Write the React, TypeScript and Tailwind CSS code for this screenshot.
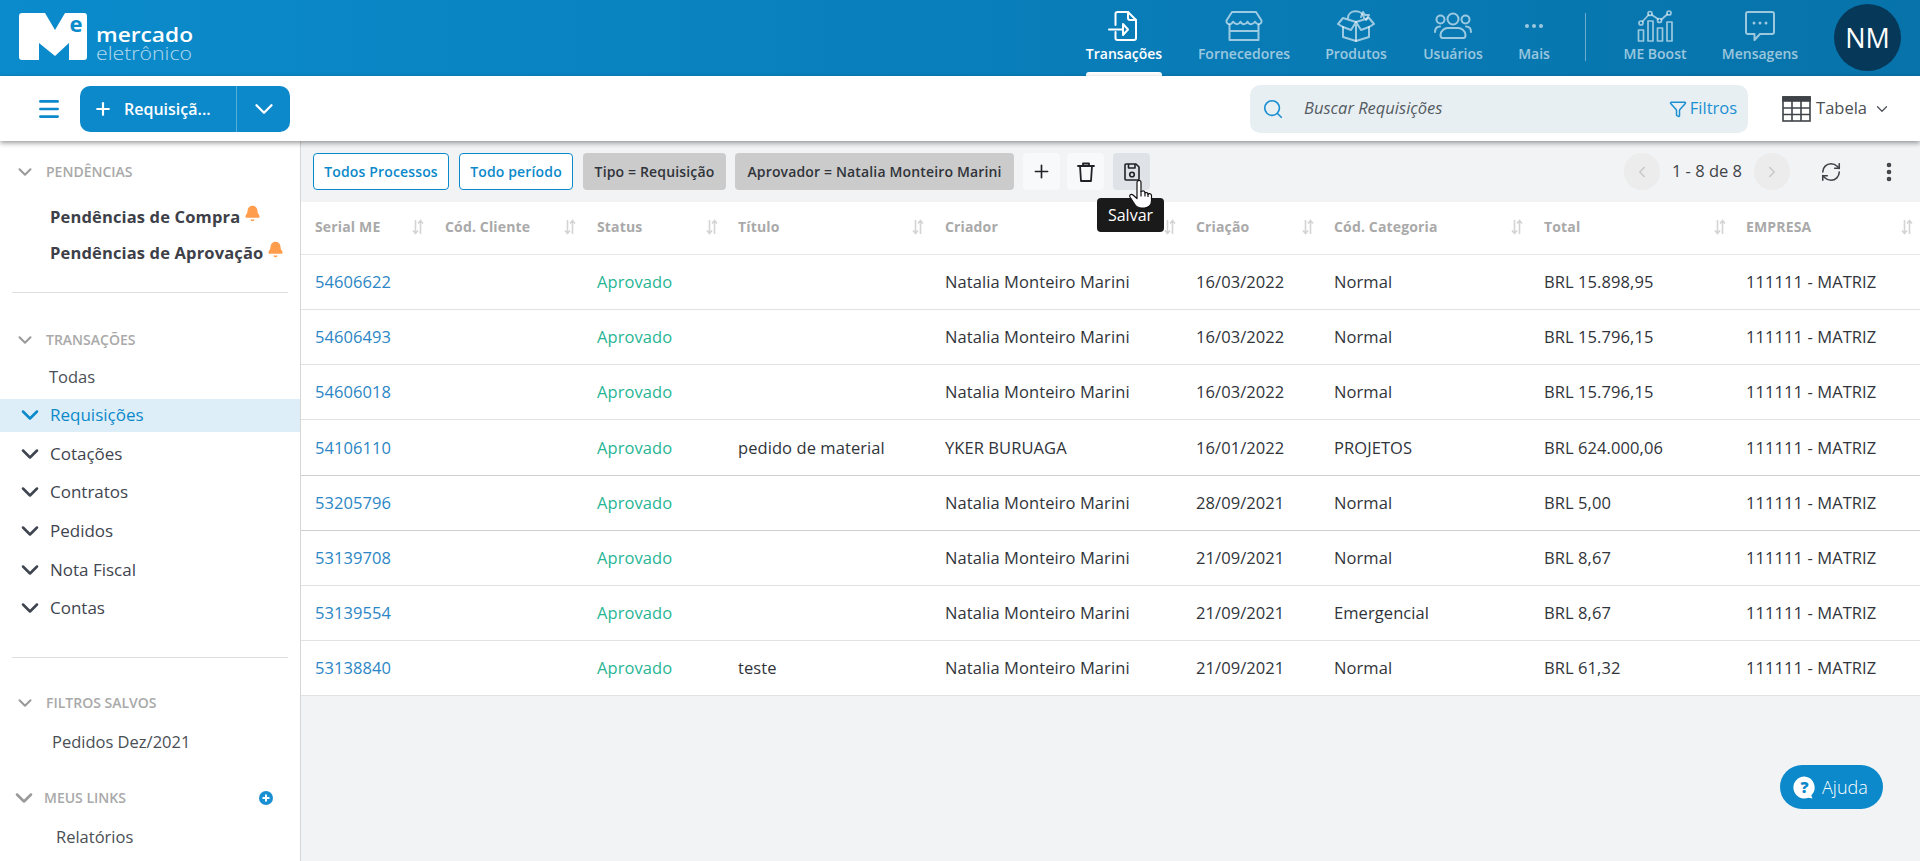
import React from "react";
import { Search, Funnel, ChevronDown, ChevronLeft, ChevronRight, RefreshCw, Plus, EllipsisVertical, Bell, Menu } from "lucide-react";

const cols = "grid grid-cols-[144px_152px_141px_207px_251px_138px_210px_202px_1fr]";

const heads: [string, number][] = [
  ["Serial ME", 27], ["Cód. Cliente", 27], ["Status", 26], ["Título", 27], ["Criador", 26], ["Criação", 26], ["Cód. Categoria", 27], ["Total", 26], ["EMPRESA", 13],
];

const rows = [
  ["54606622", "", "Natalia Monteiro Marini", "16/03/2022", "Normal", "BRL 15.898,95"],
  ["54606493", "", "Natalia Monteiro Marini", "16/03/2022", "Normal", "BRL 15.796,15"],
  ["54606018", "", "Natalia Monteiro Marini", "16/03/2022", "Normal", "BRL 15.796,15"],
  ["54106110", "pedido de material", "YKER BURUAGA", "16/01/2022", "PROJETOS", "BRL 624.000,06"],
  ["53205796", "", "Natalia Monteiro Marini", "28/09/2021", "Normal", "BRL 5,00"],
  ["53139708", "", "Natalia Monteiro Marini", "21/09/2021", "Normal", "BRL 8,67"],
  ["53139554", "", "Natalia Monteiro Marini", "21/09/2021", "Emergencial", "BRL 8,67"],
  ["53138840", "teste", "Natalia Monteiro Marini", "21/09/2021", "Normal", "BRL 61,32"],
];

function SortIcon() {
  return (
    <svg width="12" height="16" viewBox="0 0 12 16" fill="none" stroke="#d4d4d4" strokeWidth="1.6">
      <path d="M3.5 1v13M1 11.5 3.5 14.5 6 11.5" />
      <path d="M8.5 15V2M6 4.5 8.5 1.5 11 4.5" />
    </svg>
  );
}

function Logo() {
  return (
    <svg width="176" height="50" viewBox="0 0 176 50" className="shrink-0 overflow-visible" fontFamily="'Open Sans', sans-serif">
      <path
        d="M3 0H26L36 17 46 0H65a3 3 0 0 1 3 3V44a3 3 0 0 1-3 3H50V30L36 43 20 30V47H3a3 3 0 0 1-3-3V3a3 3 0 0 1 3-3Z"
        fill="#fff"
      />
      <text x="57" y="19" textAnchor="middle" fontWeight="700" fontSize="22" fill="#0b8acb">e</text>
      <text x="77" y="28.500" fontWeight="600" fontSize="19" fill="#fff" textLength="97" lengthAdjust="spacingAndGlyphs">mercado</text>
      <text x="77" y="47" fontWeight="300" fontSize="19" fill="#fff" fillOpacity="0.7" textLength="96" lengthAdjust="spacingAndGlyphs">eletrônico</text>
    </svg>
  );
}

const stroke = { fill: "none", stroke: "currentColor", strokeWidth: 2, strokeLinecap: "round", strokeLinejoin: "round" } as const;

function IconTrans() {
  return (
    <svg width="32" height="32" viewBox="0 0 32 32" {...stroke}>
      <path d="M7.500 15V4a2 2 0 0 1 2-2h10.500l8 8v18a2 2 0 0 1-2 2H9.500a2 2 0 0 1-2-2v-6" />
      <path d="M20 2v6a2 2 0 0 0 2 2h6" />
      <path d="M1 19.500h13" />
      <path d="M15 14l5 5.500-5 5.500Z" />
    </svg>
  );
}
function IconStore() {
  return (
    <svg width="38" height="30" viewBox="0 0 38 30" {...stroke}>
      <path d="M7 1h24l5.500 8.500c.5 2-1 3.700-3 3.700-2 0-3-1.700-3.500-2.500-.8 1.200-2.200 2.500-4 2.500s-3-1.300-3.500-2.500c-.7 1.200-1.700 2.500-3.500 2.500s-3-1.300-3.500-2.500c-.7 1.200-1.700 2.500-3.500 2.500S9 11.900 8 10.700C7.500 11.900 6.500 13.200 4.500 13.200c-2 0-3.500-1.700-3-3.700Z" />
      <path d="M4.500 14v15h29V14M4.500 20h29" />
    </svg>
  );
}
function IconGift() {
  return (
    <svg width="38" height="32" viewBox="0 0 38 32" {...stroke}>
      <path d="M19 12 6 8 1 14l5 3V27l13 4 13-4V17l5-3-5-6Z" />
      <path d="M19 12v19M19 12l-5 8-8-3M19 12l5 8 8-3" />
      <path d="M11 8c0-9 15-9 16 0" />
      <path d="M24 7l2-5 2 3h4l-3 5" />
    </svg>
  );
}
function IconUsers() {
  return (
    <svg width="38" height="28" viewBox="0 0 38 28" {...stroke}>
      <circle cx="19" cy="7" r="5.500" />
      <circle cx="6.500" cy="7.500" r="4" />
      <circle cx="31.500" cy="7.500" r="4" />
      <path d="M8.500 26c-2 0-2-1.500-2-3 0-4 4-7 7-7h11c3 0 7 3 7 7 0 1.500 0 3-2 3Z" />
      <path d="M1 20c0-3.500 2-5.500 5-5.500M37 20c0-3.500-2-5.500-5-5.500" />
    </svg>
  );
}
function IconChart() {
  return (
    <svg width="36" height="32" viewBox="0 0 36 32" {...stroke} strokeWidth={1.7}>
      <circle cx="4" cy="13" r="2" />
      <circle cx="13" cy="3.500" r="2" />
      <circle cx="22.500" cy="10.500" r="2" />
      <circle cx="32" cy="3" r="2" />
      <path d="M5.500 11.500 11.500 5M15 5l6 4M24.500 9.500 30 4.500" />
      <rect x="1.500" y="20" width="5" height="11" />
      <rect x="11" y="11" width="5" height="20" />
      <rect x="20.500" y="18" width="5" height="13" />
      <rect x="30" y="12" width="5" height="19" />
    </svg>
  );
}
function IconMsg() {
  return (
    <svg width="30" height="30" viewBox="0 0 30 30" fill="none" stroke="currentColor" strokeWidth="2" strokeLinejoin="round">
      <path d="M3 1h24a2 2 0 0 1 2 2v18a2 2 0 0 1-2 2H15l-5.500 6v-6H3a2 2 0 0 1-2-2V3a2 2 0 0 1 2-2Z" />
      <circle cx="9" cy="12" r="1.500" fill="currentColor" stroke="none" />
      <circle cx="15" cy="12" r="1.500" fill="currentColor" stroke="none" />
      <circle cx="21" cy="12" r="1.500" fill="currentColor" stroke="none" />
    </svg>
  );
}
function IconDots() {
  return (
    <svg width="20" height="6" viewBox="0 0 20 6" fill="currentColor">
      <circle cx="3" cy="3" r="2" />
      <circle cx="10" cy="3" r="2" />
      <circle cx="17" cy="3" r="2" />
    </svg>
  );
}
function IconTrash() {
  return (
    <svg width="20" height="22" viewBox="0 0 20 22" fill="none" stroke="#1f2328" strokeWidth="1.8" strokeLinejoin="round" strokeLinecap="round">
      <path d="M2 5h16M7 5V2.500h6V5" />
      <path d="M4 5l1 15h10l1-15" />
    </svg>
  );
}
function IconSave() {
  return (
    <svg width="16" height="18" viewBox="0 0 16 18" fill="none" stroke="#1f2328" strokeWidth="1.6" strokeLinejoin="round">
      <path d="M2 1h10l3 3v12a1 1 0 0 1-1 1H2a1 1 0 0 1-1-1V2a1 1 0 0 1 1-1Z" />
      <path d="M4.500 1v4h6.500V1" />
      <circle cx="8" cy="11.500" r="2.300" />
    </svg>
  );
}
function Hand() {
  return (
    <svg width="25" height="29" viewBox="0 0 25 29" fill="#fff" stroke="#111" strokeWidth="1.2" strokeLinejoin="round" strokeLinecap="round">
      <path d="M8 2.500a2 2 0 0 1 4 0v9l1-.3a2 2 0 0 1 3 1.300v.4a2 2 0 0 1 3 .8v.6a2 2 0 0 1 3.500 1.200V21c0 4-3 7-7 7h-3c-3 0-5-1-7-4L1 17c-1-2 1-3.500 3-2l4 3.500Z" />
      <path d="M12 11.500V16M16 12.800V16M19 14v2.500" fill="none" />
    </svg>
  );
}

function NavItem({ icon, label, w, active }: { icon: React.ReactNode; label: string; w: string; active?: boolean }) {
  return (
    <div className={`relative flex flex-col items-center h-[76px] shrink-0 ${w} ${active ? "text-white" : "text-white/60"}`}>
      <div className="h-[45px] pt-[6px] flex items-center justify-center">{icon}</div>
      <div className="text-[14px] leading-[18px] font-semibold whitespace-nowrap">{label}</div>
      {active && <div className="absolute bottom-0 left-[22px] w-[76px] h-[4px] bg-white rounded-t-[3px]" />}
    </div>
  );
}

function SectionTitle({ label, className }: { label: string; className: string }) {
  return (
    <div className={`flex items-center h-[18px] text-[#a9a9a9] ${className}`}>
      <ChevronDown size={22} strokeWidth={2.2} className="text-[#999] ml-[14px] mr-[10px] shrink-0" />
      <span className="text-[14px] leading-[18px] font-semibold">{label}</span>
    </div>
  );
}

function SideExpand({ label, active }: { label: string; active?: boolean }) {
  return (
    <div className={`flex items-center h-[33px] mb-[5.65px] ${active ? "bg-[#deeef8] text-[#0b89ca]" : "text-[#3f4550]"}`}>
      <ChevronDown size={28} strokeWidth={2.2} className="ml-[16px] mr-[6px] shrink-0" />
      <span className="text-[17px] font-medium leading-[20px]">{label}</span>
    </div>
  );
}

function PendItem({ label }: { label: string }) {
  return (
    <div className="flex items-start pl-[50px] h-[36px] text-[#3d4048]">
      <span className="text-[16.5px] leading-[22px] font-bold tracking-[0.15px] whitespace-nowrap">{label}</span>
      <Bell size={17} fill="#ff9d4d" stroke="#ff9d4d" className="ml-[4px] -mt-[1px] shrink-0" />
    </div>
  );
}

function Pill({ children, kind, className }: { children: React.ReactNode; kind: "o" | "g"; className: string }) {
  return (
    <div className={`h-[37px] flex items-center justify-center rounded-[4px] text-[14px] font-semibold tracking-[0.15px] whitespace-nowrap ${className} ${kind === "o" ? "border border-[#0b89ca] bg-white text-[#0b89ca]" : "bg-[#cbcbcb] text-[#30343a]"}`}>
      {children}
    </div>
  );
}

export default function App() {
  return (
    <div className="w-[1920px] h-[861px] overflow-hidden flex flex-col bg-[#f1f3f5] text-[#30343a] font-['Open_Sans',sans-serif] relative">
      {/* top bar */}
      <header className="h-[76px] shrink-0 flex items-start bg-gradient-to-r from-[#0b8bcc] to-[#0773aa]">
        <div className="ml-[19px] mt-[13px]">
          <Logo />
        </div>
        <nav className="ml-auto flex items-start pr-[19px]">
          <NavItem icon={<IconTrans />} label="Transações" w="w-[120px]" active />
          <NavItem icon={<IconStore />} label="Fornecedores" w="w-[120px]" />
          <NavItem icon={<IconGift />} label="Produtos" w="w-[104px]" />
          <NavItem icon={<IconUsers />} label="Usuários" w="w-[90px]" />
          <NavItem icon={<IconDots />} label="Mais" w="w-[72px]" />
          <div className="w-px h-[48px] mt-[13px] ml-[15px] mr-[2px] bg-white/40 shrink-0" />
          <NavItem icon={<IconChart />} label="ME Boost" w="w-[134px]" />
          <NavItem icon={<IconMsg />} label="Mensagens" w="w-[76px]" />
          <div className="ml-[36px] mt-[4px] w-[67px] h-[67px] rounded-full bg-[#06385a] text-white flex items-center justify-center text-[27px] leading-none">NM</div>
        </nav>
      </header>

      {/* second bar */}
      <div className="relative z-10 h-[65px] shrink-0 bg-white flex items-center shadow-[0_2px_5px_rgba(0,0,0,0.4)]">
        <Menu size={26} strokeWidth={2.4} className="ml-[36px] text-[#0b89ca] shrink-0" />
        <div className="ml-[18px] w-[210px] h-[46px] rounded-[10px] bg-[#0b89ca] text-white flex items-center">
          <Plus size={20} strokeWidth={2.6} className="ml-[13px] shrink-0" />
          <span className="ml-[11px] w-[112px] text-[16px] font-semibold whitespace-nowrap">Requisiçã...</span>
          <div className="w-px h-[46px] bg-white/30" />
          <ChevronDown size={30} strokeWidth={1.9} className="ml-[12px]" />
        </div>
        <div className="ml-auto w-[498px] h-[48px] rounded-[10px] bg-[#e8eff3] flex items-center">
          <Search size={22} strokeWidth={1.8} className="ml-[12px] text-[#1a8fd1] shrink-0" />
          <span className="ml-[20px] text-[16.5px] italic text-[#555b62]">Buscar Requisições</span>
          <Funnel size={18} strokeWidth={2} className="ml-auto text-[#1a8fd1] shrink-0" />
          <span className="ml-[3px] mr-[11px] text-[16.5px] text-[#1a8fd1]">Filtros</span>
        </div>
        <div className="ml-[34px] mr-[29px] flex items-center text-[#4a4f55]">
          <svg width="29" height="26" viewBox="0 0 29 26" fill="none" stroke="#3f4348" strokeWidth="1.6" className="shrink-0">
            <rect x="1" y="1" width="27" height="24" />
            <rect x="1" y="1" width="27" height="4" fill="#3f4348" />
            <path d="M10 5v20M19 5v20M1 12h27M1 18.500h27" />
          </svg>
          <span className="ml-[5px] text-[16.5px]">Tabela</span>
          <ChevronDown size={18} strokeWidth={1.6} className="ml-[6px]" />
        </div>
      </div>

      <div className="flex flex-1 min-h-0">
        {/* sidebar */}
        <aside className="w-[301px] shrink-0 bg-white border-r border-[#d6d6d6]">
          <SectionTitle label="PENDÊNCIAS" className="mt-[22px]" />
          <div className="pt-[25px]">
            <PendItem label="Pendências de Compra" />
            <PendItem label="Pendências de Aprovação" />
          </div>
          <div className="mx-[12px] mt-[14px] border-t border-[#dedede]" />
          <SectionTitle label="TRANSAÇÕES" className="mt-[38px]" />
          <div className="pl-[49px] mt-[13px] h-[30px] text-[16.5px] leading-[30px] text-[#4a4f55]">Todas</div>
          <div className="mt-[6.5px]">
            <SideExpand label="Requisições" active />
            <SideExpand label="Cotações" />
            <SideExpand label="Contratos" />
            <SideExpand label="Pedidos" />
            <SideExpand label="Nota Fiscal" />
            <SideExpand label="Contas" />
          </div>
          <div className="mx-[12px] mt-[32px] border-t border-[#dedede]" />
          <SectionTitle label="FILTROS SALVOS" className="mt-[36.5px]" />
          <div className="pl-[52px] mt-[17px] text-[16.5px] leading-[26px] text-[#4a4f55]">Pedidos Dez/2021</div>
          <div className="flex items-center h-[18px] mt-[33.4px] pr-[27px] text-[#a9a9a9]">
            <ChevronDown size={28} strokeWidth={2.2} className="text-[#999] ml-[10px] mr-[6px] shrink-0" />
            <span className="text-[14px] font-semibold leading-[18px]">MEUS LINKS</span>
            <svg width="14" height="14" viewBox="0 0 14 14" className="ml-auto">
              <circle cx="7" cy="7" r="7" fill="#1a8fd1" />
              <path d="M7 3.500v7M3.500 7h7" stroke="#fff" strokeWidth="2" />
            </svg>
          </div>
          <div className="pl-[56px] mt-[17px] text-[16.5px] leading-[26px] text-[#4a4f55]">Relatórios</div>
        </aside>

        {/* content */}
        <main className="flex-1 min-w-0">
          <div className="h-[61px] flex items-center pl-[12px] pr-[19px]">
            <div className="flex items-center gap-[9px]">
              <Pill kind="o" className="w-[136px]">Todos Processos</Pill>
              <Pill kind="o" className="w-[114px] ml-[1px]">Todo período</Pill>
              <Pill kind="g" className="w-[143px] ml-[1px]">Tipo = Requisição</Pill>
              <Pill kind="g" className="w-[279px]">Aprovador = Natalia Monteiro Marini</Pill>
              <div className="w-[37px] h-[37px] rounded-[4px] bg-[#f8f9fb] flex items-center justify-center text-[#1f2328]"><Plus size={21} strokeWidth={1.9} /></div>
              <div className="w-[37px] h-[37px] -ml-[2px] rounded-[4px] bg-[#f8f9fb] flex items-center justify-center"><IconTrash /></div>
              <div className="w-[37px] h-[37px] rounded-[4px] bg-[#dfe3e8] flex items-center justify-center"><IconSave /></div>
            </div>
            <div className="ml-auto flex items-center">
              <div className="w-[36px] h-[37px] rounded-full bg-[#ececec] flex items-center justify-center text-[#c8c8c8]"><ChevronLeft size={18} /></div>
              <span className="mx-[12px] text-[16.5px] text-[#3f4348] whitespace-nowrap">1 - 8 de 8</span>
              <div className="w-[36px] h-[37px] rounded-full bg-[#ececec] flex items-center justify-center text-[#c8c8c8]"><ChevronRight size={18} /></div>
              <RefreshCw size={22} strokeWidth={1.7} className="ml-[30px] text-[#3f4348]" />
              <EllipsisVertical size={24} strokeWidth={2.6} className="ml-[35px] text-[#3f4348]" />
            </div>
          </div>

          <div className="bg-white text-[16.5px] tracking-[0.08px]">
            <div className={`${cols} h-[53px] pb-[3px] border-b border-[#e4e6e9]`}>
              {heads.map(([h, pr], i) => (
                <div key={h} className={`flex items-center justify-between text-[14px] font-bold tracking-[0.15px] text-[#a9a9a9] ${i === 0 ? "pl-[14px]" : ""}`}>
                  <span className="whitespace-nowrap">{h}</span>
                  <span style={{ marginRight: pr - 6 }}><SortIcon /></span>
                </div>
              ))}
            </div>
            {rows.map((r, i) => (
              <div key={r[0]} className={`${cols} h-[55.15px] pt-[1px] items-center border-b ${i === 3 || i === 4 ? "border-[#cfcfcf]" : "border-[#e2e2e2]"}`}>
                <div className="pl-[14px] text-[#2b86c5]">{r[0]}</div>
                <div />
                <div className="text-[#27b594]">Aprovado</div>
                <div>{r[1]}</div>
                <div>{r[2]}</div>
                <div>{r[3]}</div>
                <div>{r[4]}</div>
                <div>{r[5]}</div>
                <div>111111 - MATRIZ</div>
              </div>
            ))}
          </div>
        </main>
      </div>

      {/* tooltip */}
      <div className="absolute z-20 left-[1097px] top-[198px] w-[67px] h-[34px] rounded-[4px] bg-[#1a1a1a] text-white text-[16px] font-normal flex items-center justify-center">Salvar</div>
      <div className="absolute z-30 left-[1129px] top-[180px]"><Hand /></div>

      {/* help */}
      <div className="absolute z-20 left-[1780px] top-[765px] w-[103px] h-[44px] rounded-[22px] bg-[#0b89ca] text-white flex items-center pl-[13px]">
        <svg width="23" height="23" viewBox="0 0 23 23" className="shrink-0">
          <path d="M11.500 0.500a11 11 0 1 0 4 21.200l4 .8-1.200-3.200A11 11 0 0 0 11.500 .5Z" fill="#fff" />
          <text x="11.500" y="17" textAnchor="middle" fontFamily="'Open Sans', sans-serif" fontWeight="800" fontSize="16" fill="#0b89ca">?</text>
        </svg>
        <span className="ml-[6px] text-[18px] font-light">Ajuda</span>
      </div>
    </div>
  );
}
